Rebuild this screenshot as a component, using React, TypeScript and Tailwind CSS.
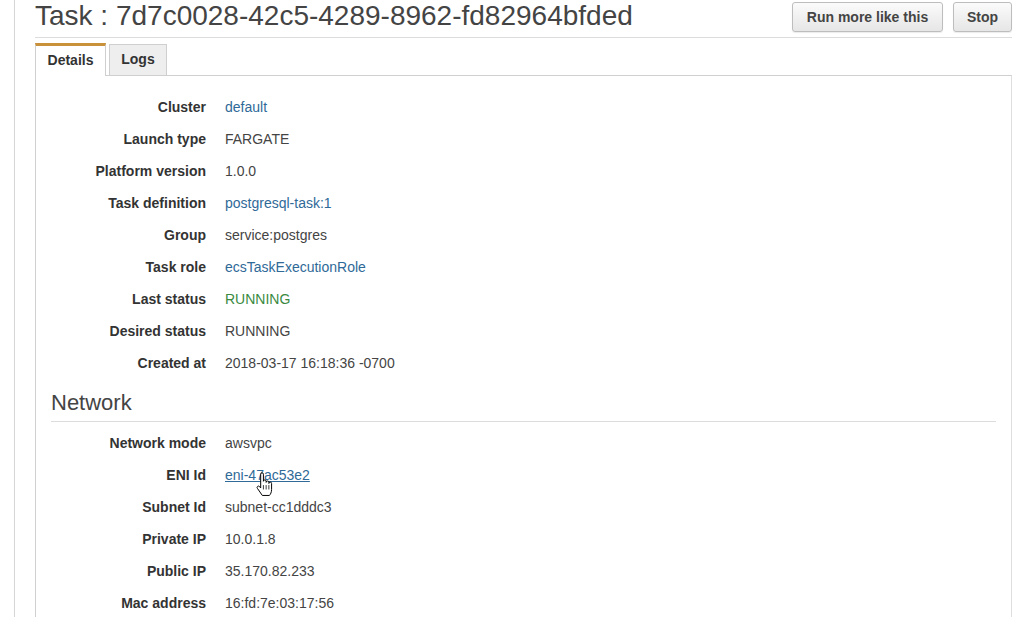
import React from "react";

const rows1: { label: string; value: string; kind?: "link" | "green" }[] = [
  { label: "Cluster", value: "default", kind: "link" },
  { label: "Launch type", value: "FARGATE" },
  { label: "Platform version", value: "1.0.0" },
  { label: "Task definition", value: "postgresql-task:1", kind: "link" },
  { label: "Group", value: "service:postgres" },
  { label: "Task role", value: "ecsTaskExecutionRole", kind: "link" },
  { label: "Last status", value: "RUNNING", kind: "green" },
  { label: "Desired status", value: "RUNNING" },
  { label: "Created at", value: "2018-03-17 16:18:36 -0700" },
];

const rows2: { label: string; value: string; kind?: "link" | "ulink" }[] = [
  { label: "Network mode", value: "awsvpc" },
  { label: "ENI Id", value: "eni-47ac53e2", kind: "ulink" },
  { label: "Subnet Id", value: "subnet-cc1dddc3" },
  { label: "Private IP", value: "10.0.1.8" },
  { label: "Public IP", value: "35.170.82.233" },
  { label: "Mac address", value: "16:fd:7e:03:17:56" },
];

function Row({ label, value, kind }: { label: string; value: string; kind?: string }) {
  let cls = "text-[#444]";
  if (kind === "link") cls = "text-[#2f6a98]";
  if (kind === "ulink") cls = "text-[#2f6a98] underline";
  if (kind === "green") cls = "text-[#3a8a3f]";
  return (
    <div className="flex h-[32px] items-center text-[14px]">
      <div className="w-[155px] text-right font-bold text-[#333]">{label}</div>
      <div className={"ml-[19px] " + cls}>{value}</div>
    </div>
  );
}

function Btn({ children, w }: { children: React.ReactNode; w: string }) {
  return (
    <div
      className={
        "flex h-[30px] items-center justify-center rounded-[3px] border border-[#bdbdbd] bg-gradient-to-b from-[#fbfbfb] to-[#e6e6e6] text-[14px] font-bold text-[#444] shadow-[0_1px_1px_rgba(0,0,0,0.08)] " +
        w
      }
    >
      {children}
    </div>
  );
}

export default function App() {
  return (
    <div
      className="relative h-[617px] w-full overflow-hidden bg-white"
      style={{ fontFamily: '"Liberation Sans", Arial, sans-serif' }}
    >
      <div className="ml-[14px] h-full border-l border-[#d6d6d6] pl-[20px] pr-[15px]">
        {/* Header */}
        <div className="flex h-[38px] items-start justify-between border-b border-[#dcdcdc]">
          <h1 className="text-[28px] leading-[32px] text-[#444]">
            Task : 7d7c0028-42c5-4289-8962-fd82964bfded
          </h1>
          <div className="mt-[2px] flex gap-[10px]">
            <Btn w="w-[151px]">Run more like this</Btn>
            <Btn w="w-[59px]">Stop</Btn>
          </div>
        </div>

        {/* Tabs */}
        <div className="relative z-10 -mb-px mt-[5px] flex items-end">
          <div className="flex h-[33px] w-[71px] items-center justify-center border-x border-t-[3px] border-x-[#cfcfcf] border-t-[#c8913a] bg-white pb-[2px] text-[14px] font-bold text-[#333]">
            Details
          </div>
          <div className="ml-[3px] flex h-[32px] w-[58px] items-center justify-center border border-[#cfcfcf] bg-[#eeeeee] pb-[1px] text-[14px] font-bold text-[#333]">
            Logs
          </div>
        </div>

        {/* Panel */}
        <div className="h-[600px] border border-[#d0d0d0] border-r-[#dedede] px-[15px] pt-[15px]">
          {rows1.map((r) => (
            <Row key={r.label} {...r} />
          ))}
          <div className="flex h-[43px] items-end border-b border-[#dcdcdc] pb-[5px]">
            <h2 className="text-[22px] leading-[26px] text-[#444]">Network</h2>
          </div>
          <div className="mt-[5px]">
            {rows2.map((r) => (
              <Row key={r.label} {...r} />
            ))}
          </div>
        </div>
      </div>

      {/* Hand cursor */}
      <svg
        className="absolute left-[255px] top-[472px]"
        width="19"
        height="24"
        viewBox="0 0 17 22"
      >
        <path
          d="M5 2 a1.25 1.25 0 0 1 2.5 0 v6.5 a1.25 1.25 0 0 1 2.5 0 v1 a1.25 1.25 0 0 1 2.5 0 v1 a1.25 1.25 0 0 1 2.5 0 v5.5 c0 2.5 -1 4.5 -2 5.5 h-6.5 l-4.5 -6.5 a1.2 1.2 0 0 1 2 -1.6 l1 1.2 z"
          fill="white"
          stroke="black"
          strokeWidth="0.9"
          strokeLinejoin="round"
        />
        <path d="M10 12 v4 M12.5 12 v4 M7.5 12 v4" stroke="black" strokeWidth="0.7" />
      </svg>
    </div>
  );
}
